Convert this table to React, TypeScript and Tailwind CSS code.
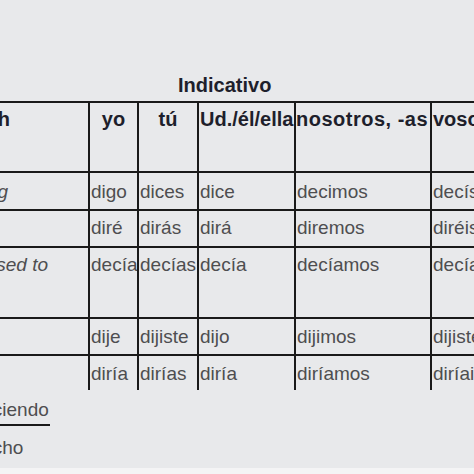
import React from "react";

type Row = {
  en: string;
  enPr: string;
  h: string;
  pt: string;
  cells: string[];
};

const rows: Row[] = [
  { en: "saying", enPr: "pr-[80px]", h: "h-[38px]", pt: "pt-[8px]", cells: ["digo", "dices", "dice", "decimos", "decís"] },
  { en: "", enPr: "pr-[80px]", h: "h-[37px]", pt: "pt-[6px]", cells: ["diré", "dirás", "dirá", "diremos", "diréis"] },
  { en: "I used to", enPr: "pr-[40px]", h: "h-[71px]", pt: "pt-[6px]", cells: ["decía", "decías", "decía", "decíamos", "decíais"] },
  { en: "", enPr: "pr-[80px]", h: "h-[37px]", pt: "pt-[7px]", cells: ["dije", "dijiste", "dijo", "dijimos", "dijisteis"] },
  { en: "", enPr: "pr-[80px]", h: "h-[36px]", pt: "pt-[7px]", cells: ["diría", "dirías", "diría", "diríamos", "diríais"] },
];

const widths = ["w-[49px]", "w-[60px]", "w-[97px]", "w-[136px]", "w-[160px]"];

export default function App() {
  return (
    <div
      className="w-[474px] h-[474px] overflow-hidden bg-[#e8e9eb] flex flex-col"
      style={{ fontFamily: '"Liberation Sans", Arial, sans-serif' }}
    >
      <div className="pt-[73px] pl-[178px] h-[101px] shrink-0 text-[20px] leading-[24px] font-bold text-[#1e1f2b] whitespace-nowrap">
        Indicativo
      </div>

      {/* header row */}
      <div className="flex shrink-0 h-[70px] border-t-2 border-[#1a1a1a] text-[20px] leading-[22px] font-bold text-[#1e1f2b] whitespace-nowrap">
        <div className="w-[88px] shrink-0 overflow-hidden flex justify-end pt-[5px] pr-[78px]">
          <span>English</span>
        </div>
        <div className="w-[49px] shrink-0 border-l-2 border-[#1a1a1a] pt-[5px] text-center">yo</div>
        <div className="w-[60px] shrink-0 border-l-2 border-[#1a1a1a] pt-[5px] text-center">tú</div>
        <div className="w-[97px] shrink-0 border-l-2 border-[#1a1a1a] pt-[5px] pl-[1px]">Ud./él/ella</div>
        <div className="w-[136px] shrink-0 border-l-2 border-[#1a1a1a] pt-[5px] tracking-[0.5px]">nosotros, -as</div>
        <div className="w-[160px] shrink-0 border-l-2 border-[#1a1a1a] pt-[5px] pl-[1px]">vosotros, -as</div>
      </div>

      {rows.map((r, i) => (
        <div
          key={i}
          className={`flex shrink-0 ${r.h} border-t-2 border-[#1a1a1a] text-[19px] leading-[22px] text-[#4e4e50] whitespace-nowrap`}
        >
          <div className={`w-[88px] shrink-0 overflow-hidden flex justify-end italic ${r.pt} ${r.enPr}`}>
            <span>{r.en}</span>
          </div>
          {r.cells.map((c, j) => (
            <div key={j} className={`${widths[j]} shrink-0 border-l-2 border-[#1a1a1a] ${r.pt} pl-[1px]`}>
              {c}
            </div>
          ))}
        </div>
      ))}

      <div className="mt-[9px] ml-[-22px] w-[72px] shrink-0 border-b-2 border-[#1a1a1a] pb-[3px] text-[19px] leading-[22px] text-[#4e4e50] whitespace-nowrap">
        diciendo
      </div>
      <div className="mt-[11px] ml-[-22px] shrink-0 text-[19px] leading-[22px] text-[#4e4e50] whitespace-nowrap">
        dicho
      </div>
      <div className="mt-auto h-[6px] shrink-0 bg-[#f4f4f5]" />
    </div>
  );
}
